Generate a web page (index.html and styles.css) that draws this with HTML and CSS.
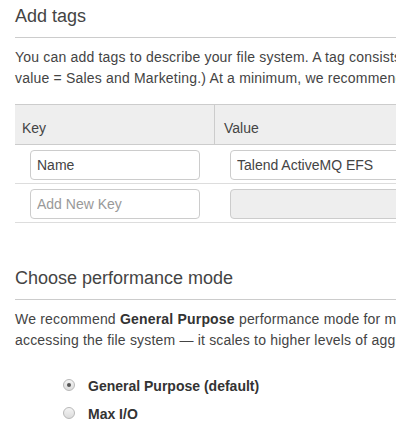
FILE: index.html
```html
<!DOCTYPE html>
<html lang="en">
<head>
    <meta charset="UTF-8">
    <meta name="viewport" content="width=device-width, initial-scale=1.0">
    <title>Create file system</title>
    <link rel="stylesheet" href="styles.css">
</head>
<body>

    <div class="page">
        <section class="step">
            <h2 class="step-title">Add tags</h2>
            <hr class="divider">
            <p class="intro">You can add tags to describe your file system. A tag consists of a case-sensitive key-value pair. (For example, you can define a tag with key = Corporate Department and<br>value = Sales and Marketing.) At a minimum, we recommend a tag with key = Name.</p>

            <div class="tags">
                <div class="tags-row tags-head">
                    <div class="cell cell-key">Key</div>
                    <div class="cell cell-value">Value</div>
                </div>
                <div class="tags-row">
                    <div class="cell cell-key"><input type="text" class="tag-input" value="Name"></div>
                    <div class="cell cell-value"><input type="text" class="tag-input tag-input-wide" value="Talend ActiveMQ EFS"></div>
                </div>
                <div class="tags-row">
                    <div class="cell cell-key"><input type="text" class="tag-input" placeholder="Add New Key"></div>
                    <div class="cell cell-value"><input type="text" class="tag-input tag-input-wide" disabled></div>
                </div>
            </div>
        </section>

        <section class="step step-next">
            <h2 class="step-title">Choose performance mode</h2>
            <hr class="divider">
            <p class="intro">We recommend <strong>General Purpose</strong> performance mode for most file systems. <strong>Max I/O</strong> performance mode is optimized for applications where tens, hundreds, or thousands of EC2 instances are<br>accessing the file system &mdash; it scales to higher levels of aggregate throughput and operations per second with a tradeoff of slightly higher latencies for file operations.</p>

            <div class="modes">
                <label class="mode">
                    <input type="radio" name="mode" class="mode-radio" checked>
                    <span>General Purpose (default)</span>
                </label>
                <label class="mode">
                    <input type="radio" name="mode" class="mode-radio">
                    <span>Max I/O</span>
                </label>
            </div>
        </section>
    </div>

</body>
</html>
```

FILE: styles.css
```css
:root {
    --text: #444444;
    --text-strong: #333333;
    --line: #cccccc;
    --row-line: #dddddd;
    --head-bg: #eeeeee;
}

html,
body {
    margin: 0;
    overflow: hidden;
}

body {
    font-family: "Liberation Sans", Arial, Helvetica, sans-serif;
    color: var(--text);
    background-color: #ffffff;
}

.page {
    width: 1400px;
    padding: 4px 0 0 15px;
}

.step-title {
    margin: 0;
    font-size: 18px;
    font-weight: normal;
    line-height: 24px;
}

.step-next {
    margin-top: 43px;
}

.divider {
    margin: 9px 0 0;
    border: 0;
    border-top: 1px solid var(--line);
}

.intro {
    margin: 9px 0 0;
    font-size: 14px;
    line-height: 21px;
    letter-spacing: 0.19px;
    white-space: nowrap;
}

.intro strong {
    color: var(--text-strong);
}

/* tags table */
.tags {
    margin-top: 15px;
}

.tags-row {
    display: flex;
    border-bottom: 1px solid var(--row-line);
}

.tags-head {
    background-color: var(--head-bg);
    border-top: 1px solid var(--line);
    border-bottom: 1px solid var(--line);
}

.cell {
    box-sizing: border-box;
    padding: 5px 0 3px 15px;
}

.cell-key {
    width: 200px;
}

.cell-value {
    width: 400px;
}

.tags-head .cell {
    padding: 13px 8px 6px 7px;
    font-size: 14px;
    line-height: 20px;
}

.tags-head .cell-key {
    border-right: 1px solid var(--line);
}

.tags-head .cell-value {
    padding-left: 9px;
}

.tag-input {
    display: block;
    box-sizing: border-box;
    width: 170px;
    height: 30px;
    margin: 0;
    padding: 0 6px;
    border: 1px solid var(--line);
    border-radius: 4px;
    font-family: inherit;
    font-size: 14px;
    color: var(--text);
    background-color: #ffffff;
}

.tag-input::placeholder {
    color: #999999;
}

.tag-input-wide {
    width: 300px;
}

.tag-input:disabled {
    background-color: #eeeeee;
}

/* performance mode */
.modes {
    margin-top: 21px;
    padding-left: 48px;
}

.mode {
    display: flex;
    align-items: flex-start;
    gap: 13px;
    font-size: 14px;
    font-weight: bold;
    line-height: 28px;
    color: var(--text-strong);
}

.mode-radio {
    appearance: none;
    box-sizing: border-box;
    width: 12px;
    height: 12px;
    margin: 7px 0 0;
    border: 1px solid #b8b8b8;
    border-radius: 50%;
    background: linear-gradient(#f4f4f4, #dcdcdc);
    display: flex;
    align-items: center;
    justify-content: center;
}

.mode-radio:checked::after {
    content: "";
    width: 4px;
    height: 4px;
    border-radius: 50%;
    background-color: #555555;
}
```
